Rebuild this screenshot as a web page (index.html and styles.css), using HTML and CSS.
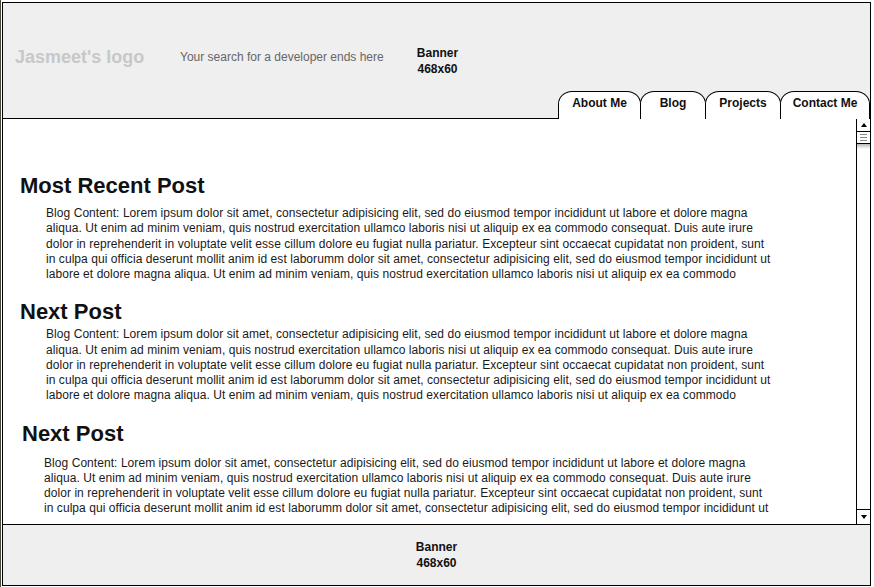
FILE: index.html
```html
<!DOCTYPE html>
<html lang="en">
<head>
<meta charset="utf-8">
<title>Jasmeet's site</title>
<link rel="stylesheet" href="styles.css">
</head>
<body>
<div class="page">
  <div class="frame">
    <header class="header">
      <div class="brand-row">
        <div class="logo">Jasmeet's logo</div>
        <div class="tagline">Your search for a developer ends here</div>
        <div class="banner banner-top">Banner<br>468x60</div>
      </div>
      <nav class="tab-row">
        <div class="tab-spacer"></div>
        <a class="tab tab-about">About Me</a>
        <a class="tab tab-blog">Blog</a>
        <a class="tab tab-projects">Projects</a>
        <a class="tab tab-contact">Contact Me</a>
      </nav>
    </header>
    <main class="content">
      <div class="posts">
        <article class="post post-first">
          <h2 class="post-title">Most Recent Post</h2>
          <p class="post-body">Blog Content: Lorem ipsum dolor sit amet, consectetur adipisicing elit, sed do eiusmod tempor incididunt ut labore et dolore magna<br>aliqua. Ut enim ad minim veniam, quis nostrud exercitation ullamco laboris nisi ut aliquip ex ea commodo consequat. Duis aute irure<br>dolor in reprehenderit in voluptate velit esse cillum dolore eu fugiat nulla pariatur. Excepteur sint occaecat cupidatat non proident, sunt<br>in culpa qui officia deserunt mollit anim id est laborumm dolor sit amet, consectetur adipisicing elit, sed do eiusmod tempor incididunt ut<br>labore et dolore magna aliqua. Ut enim ad minim veniam, quis nostrud exercitation ullamco laboris nisi ut aliquip ex ea commodo</p>
        </article>
        <article class="post post-second">
          <h2 class="post-title">Next Post</h2>
          <p class="post-body">Blog Content: Lorem ipsum dolor sit amet, consectetur adipisicing elit, sed do eiusmod tempor incididunt ut labore et dolore magna<br>aliqua. Ut enim ad minim veniam, quis nostrud exercitation ullamco laboris nisi ut aliquip ex ea commodo consequat. Duis aute irure<br>dolor in reprehenderit in voluptate velit esse cillum dolore eu fugiat nulla pariatur. Excepteur sint occaecat cupidatat non proident, sunt<br>in culpa qui officia deserunt mollit anim id est laborumm dolor sit amet, consectetur adipisicing elit, sed do eiusmod tempor incididunt ut<br>labore et dolore magna aliqua. Ut enim ad minim veniam, quis nostrud exercitation ullamco laboris nisi ut aliquip ex ea commodo</p>
        </article>
        <article class="post post-third">
          <h2 class="post-title">Next Post</h2>
          <p class="post-body">Blog Content: Lorem ipsum dolor sit amet, consectetur adipisicing elit, sed do eiusmod tempor incididunt ut labore et dolore magna<br>aliqua. Ut enim ad minim veniam, quis nostrud exercitation ullamco laboris nisi ut aliquip ex ea commodo consequat. Duis aute irure<br>dolor in reprehenderit in voluptate velit esse cillum dolore eu fugiat nulla pariatur. Excepteur sint occaecat cupidatat non proident, sunt<br>in culpa qui officia deserunt mollit anim id est laborumm dolor sit amet, consectetur adipisicing elit, sed do eiusmod tempor incididunt ut<br>labore et dolore magna aliqua. Ut enim ad minim veniam, quis nostrud exercitation ullamco laboris nisi ut aliquip ex ea commodo</p>
        </article>
      </div>
      <div class="scrollbar">
        <div class="sb-btn sb-up"><span class="arrow-up"></span></div>
        <div class="sb-thumb"><span class="grip"></span><span class="grip"></span><span class="grip"></span></div>
        <div class="sb-shade"></div>
        <div class="sb-track"></div>
        <div class="sb-btn sb-down"><span class="arrow-down"></span></div>
      </div>
    </main>
    <footer class="footer">
      <div class="banner">Banner<br>468x60</div>
    </footer>
  </div>
</div>
</body>
</html>
```
FILE: styles.css
```css
html, body {
  margin: 0;
  padding: 0;
  background: #fff;
}
body {
  font-family: "Liberation Sans", Arial, sans-serif;
  color: #111;
}
.page {
  width: 874px;
  height: 587px;
  box-sizing: border-box;
  border-left: 1px solid #4a4a3a;
  padding: 2px 0 0 1px;
}
.frame {
  width: 869px;
  height: 584px;
  box-sizing: border-box;
  border: 1px solid #000;
  display: flex;
  flex-direction: column;
  overflow: hidden;
}
.header {
  height: 116px;
  background: #efefef;
  display: flex;
  flex-direction: column;
  flex: none;
}
.brand-row {
  height: 88px;
  box-sizing: border-box;
  padding: 18px 0 0 12px;
  display: flex;
  align-items: center;
}
.logo {
  width: 165px;
  margin-top: 2px;
  font-size: 18px;
  font-weight: bold;
  color: #c8c8c8;
  white-space: nowrap;
}
.tagline {
  width: 227px;
  margin-top: 2px;
  font-size: 12px;
  color: #666;
  white-space: nowrap;
}
.banner {
  width: 61px;
  text-align: center;
  font-size: 12px;
  font-weight: bold;
  line-height: 16px;
  color: #111;
}
.banner-top {
  padding-top: 9px;
}
.tab-row {
  height: 28px;
  display: flex;
  flex: none;
}
.tab-spacer {
  flex: 1;
  border-bottom: 1px solid #000;
}
.tab {
  height: 28px;
  box-sizing: border-box;
  background: #fff;
  border: 1px solid #000;
  border-bottom: none;
  border-radius: 14px 14px 0 0 / 13px 13px 0 0;
  margin-left: -1px;
  padding-top: 4px;
  font-size: 12px;
  line-height: 14px;
  font-weight: bold;
  text-align: center;
  color: #111;
  text-decoration: none;
}
.tab-about { width: 83px; margin-left: 0; }
.tab-blog { width: 66px; }
.tab-projects { width: 76px; }
.tab-contact { width: 90px; }
.content {
  height: 405px;
  flex: none;
  display: flex;
  background: #fff;
}
.posts {
  flex: 1;
  height: 398px;
  overflow: hidden;
  padding-left: 17px;
}
.post-title {
  margin: 0;
  font-size: 22px;
  line-height: 26px;
  font-weight: bold;
  color: #111;
}
.post-body {
  margin: 0 0 0 26px;
  width: 780px;
  font-size: 12px;
  line-height: 15.25px;
  letter-spacing: 0.06px;
  white-space: nowrap;
  color: #1a1a1a;
}
.post-first { margin-top: 54px; }
.post-first .post-title { margin-bottom: 7px; }
.post-second { margin-top: 17px; }
.post-second .post-title { margin-bottom: 2px; }
.post-third { margin-top: 17px; }
.post-third .post-title { margin-bottom: 9px; margin-left: 2px; }
.post-third .post-body { margin-left: 24px; }
.scrollbar {
  width: 14px;
  box-sizing: border-box;
  border-left: 1px solid #000;
  display: flex;
  flex-direction: column;
  flex: none;
}
.sb-btn {
  height: 12px;
  display: flex;
  align-items: center;
  justify-content: center;
  background: #fff;
}
.sb-up { border-bottom: 1px solid #000; }
.sb-down { border-top: 1px solid #000; height: 14px; }
.arrow-up {
  width: 0;
  height: 0;
  border-left: 3px solid transparent;
  border-right: 3px solid transparent;
  border-bottom: 4px solid #000;
}
.arrow-down {
  width: 0;
  height: 0;
  border-left: 3px solid transparent;
  border-right: 3px solid transparent;
  border-top: 4px solid #000;
}
.sb-thumb {
  height: 12px;
  box-sizing: border-box;
  border-bottom: 1px solid #000;
  background: #fff;
  display: flex;
  flex-direction: column;
  align-items: center;
  justify-content: center;
  gap: 2px;
}
.grip {
  width: 7px;
  height: 1px;
  background: #888;
}
.sb-shade {
  height: 5px;
  background: linear-gradient(#b8b8b8, #fff);
}
.sb-track {
  flex: 1;
  background: #fff;
}
.footer {
  flex: 1;
  border-top: 1px solid #000;
  background: #efefef;
  display: flex;
  align-items: center;
  justify-content: center;
}
```
